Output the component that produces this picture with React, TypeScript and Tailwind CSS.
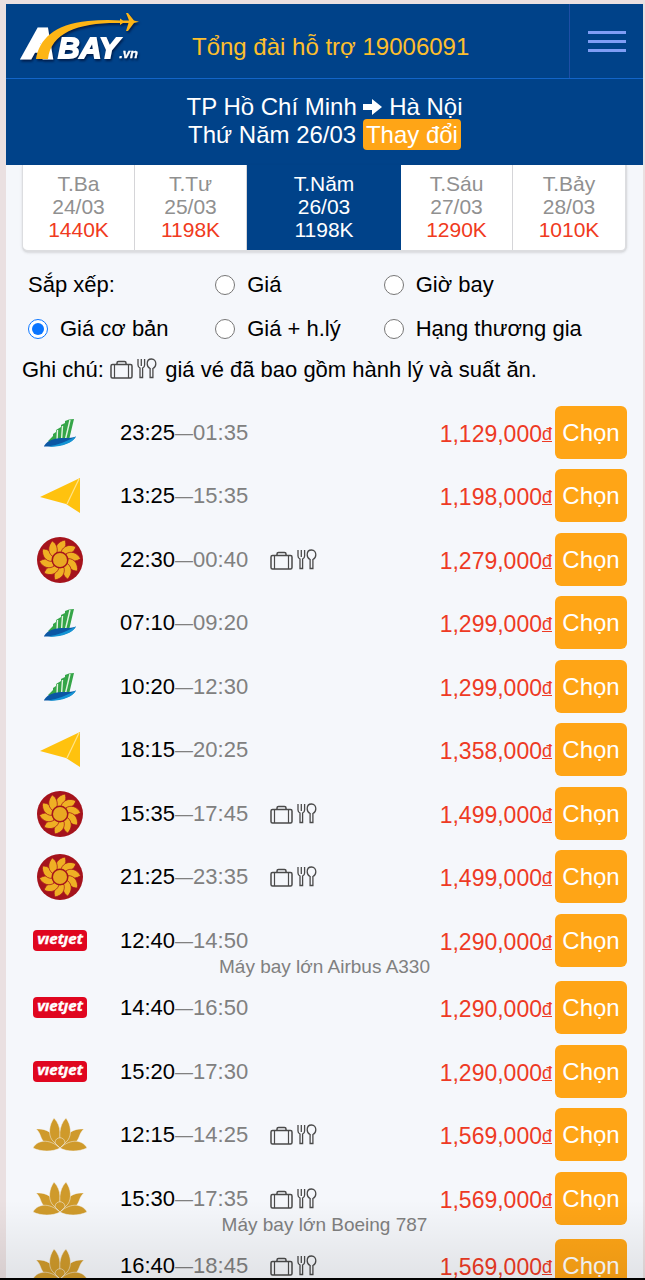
import React, { useState } from 'react';

type Airline = 'bamboo' | 'vietravel' | 'pacific' | 'vietjet' | 'vna';

interface Flight {
  airline: Airline;
  depart: string;
  arrive: string;
  price: string;
  meal?: boolean;
  note?: string;
}

const days = [
  { name: 'T.Ba', date: '24/03', price: '1440K' },
  { name: 'T.Tư', date: '25/03', price: '1198K' },
  { name: 'T.Năm', date: '26/03', price: '1198K' },
  { name: 'T.Sáu', date: '27/03', price: '1290K' },
  { name: 'T.Bảy', date: '28/03', price: '1010K' },
];

const sortOptions = [
  { id: 'price', label: 'Giá' },
  { id: 'time', label: 'Giờ bay' },
  { id: 'base', label: 'Giá cơ bản' },
  { id: 'luggage', label: 'Giá + h.lý' },
  { id: 'business', label: 'Hạng thương gia' },
];

const flights: Flight[] = [
  { airline: 'bamboo', depart: '23:25', arrive: '01:35', price: '1,129,000' },
  { airline: 'vietravel', depart: '13:25', arrive: '15:35', price: '1,198,000' },
  { airline: 'pacific', depart: '22:30', arrive: '00:40', price: '1,279,000', meal: true },
  { airline: 'bamboo', depart: '07:10', arrive: '09:20', price: '1,299,000' },
  { airline: 'bamboo', depart: '10:20', arrive: '12:30', price: '1,299,000' },
  { airline: 'vietravel', depart: '18:15', arrive: '20:25', price: '1,358,000' },
  { airline: 'pacific', depart: '15:35', arrive: '17:45', price: '1,499,000', meal: true },
  { airline: 'pacific', depart: '21:25', arrive: '23:35', price: '1,499,000', meal: true },
  { airline: 'vietjet', depart: '12:40', arrive: '14:50', price: '1,290,000', note: 'Máy bay lớn Airbus A330' },
  { airline: 'vietjet', depart: '14:40', arrive: '16:50', price: '1,290,000' },
  { airline: 'vietjet', depart: '15:20', arrive: '17:30', price: '1,290,000' },
  { airline: 'vna', depart: '12:15', arrive: '14:25', price: '1,569,000', meal: true },
  { airline: 'vna', depart: '15:30', arrive: '17:35', price: '1,569,000', meal: true, note: 'Máy bay lớn Boeing 787' },
  { airline: 'vna', depart: '16:40', arrive: '18:45', price: '1,569,000', meal: true },
];

const SiteLogo: React.FC = () => (
  <svg
    className="overflow-visible drop-shadow-[1px_2px_1px_rgba(0,20,60,0.8)]"
    width="120"
    height="56"
    viewBox="0 0 120 56"
    role="img"
    aria-label="ABAY.vn"
  >
    <g fontFamily="Liberation Sans, Arial, sans-serif" fontWeight="bold" fontStyle="italic" fill="#fff" stroke="#fff">
      <text x="3" y="45" fontSize="39" strokeWidth="5">A</text>
      <text x="36" y="46" fontSize="30" strokeWidth="1.800">
        BAY
        <tspan fontSize="13" strokeWidth="0.300">.vn</tspan>
      </text>
    </g>
    <path d="M14 47C17 28 32 12 66 9Q82 7.500 100 8.500V11C58 10 29 20 26 47Z" fill="#fdb515" />
    <path d="M98 6.500L101 8.500H107L104 1H106L112 8.500L117 9.700L112 11L106 19H104L106.500 11H101L98 13Z" fill="#fdb515" />
  </svg>
);

const MealIcons: React.FC<{ className?: string }> = ({ className = '' }) => (
  <svg className={className} width="47" height="22" viewBox="0 0 47 22" fill="none" stroke="#4a4a4a" strokeWidth="1.500" role="img" aria-label="Hành lý và suất ăn">
    <rect x="1" y="6.500" width="21" height="13.500" rx="1.500" />
    <path d="M4.500 6.500V20M18.500 6.500V20" strokeWidth="1.200" />
    <path d="M7 6.500V5q0-1.500 1.500-1.500h6q1.500 0 1.500 1.500v1.500" />
    <path d="M28 1v6q0 2.200 2 3v9.500h2.600V10q2-.8 2-3V1M31.300 1v7" strokeWidth="1.300" />
    <path d="M41.500 1c-2.800 0-4.300 2.200-4.300 4.700 0 2.300 1.200 4 2.900 4.800v9h2.800v-9c1.700-.8 2.900-2.500 2.900-4.800 0-2.500-1.500-4.700-4.300-4.700z" strokeWidth="1.300" />
  </svg>
);

const BambooLogo = () => (
  <svg width="34" height="30" viewBox="0 0 34 30" role="img" aria-label="Bamboo Airways">
    <path d="M5 23L10 18V16L13 14V12L18 9V7L22 5V3L26 1.500L31 1L26 22L8 25Z" fill="#35a548" />
    <path d="M14.500 12L14 23M19.500 8L18.500 22M27 2L22.500 21" stroke="#e4f3e0" strokeWidth="1.400" />
    <path d="M1 28C5 21 14 20 21 20C26 20 30 20 33 18.500C29 26 14 29 1 28.500Z" fill="#0b57a4" />
    <path d="M5 28.500C15 27 24 23 33 18.500C29 26 16 29.500 5 28.500Z" fill="#1394d4" />
  </svg>
);

const VietravelLogo = () => (
  <svg width="42" height="36" viewBox="0 0 42 36" role="img" aria-label="Vietravel Airlines">
    <path d="M1 19L41 0V35L27 26Z" fill="#ffc20e" />
    <path d="M40 1L28 26" stroke="#ffe48a" strokeWidth="1.200" />
  </svg>
);

const PacificLogo = () => (
  <svg width="46" height="46" viewBox="0 0 46 46" role="img" aria-label="Pacific Airlines">
    <circle cx="23" cy="23" r="23" fill="#a5131c" />
    {[0, 36, 72, 108, 144, 180, 216, 252, 288, 324].map((angle) => (
      <path
        key={angle}
        d="M19 15.500C17.500 9.500 21 4.500 28 3C30 8 28 13 24 16Z"
        fill="#efb024"
        stroke="#a5131c"
        strokeWidth="0.700"
        transform={`rotate(${angle} 23 23)`}
      />
    ))}
    <circle cx="23" cy="23" r="8.500" fill="#a5131c" />
    <circle cx="23" cy="23" r="7" fill="#e9a822" />
  </svg>
);

const VietjetLogo = () => (
  <svg className="overflow-visible" width="54" height="21" viewBox="0 0 54 21" role="img" aria-label="Vietjet">
    <rect width="54" height="21" rx="4" fill="#e0061f" />
    <text x="27" y="14" fontSize="15" fontWeight="bold" fontStyle="italic" textAnchor="middle" fill="#fff" stroke="#fff" strokeWidth="0.400" fontFamily="Open Sans, sans-serif">vıetȷet</text>
  </svg>
);

const LotusLogo = () => (
  <svg width="54" height="34" viewBox="0 0 54 34" role="img" aria-label="Vietnam Airlines">
    <g fill="#cf9a2b" stroke="#f4f6fb" strokeWidth="0.500">
      <path d="M3 11C13 10 22 15 25 27C21 31 15 29 11 24C7 20 8 15 3 11Z" />
      <path d="M51 11C41 10 32 15 29 27C33 31 39 29 43 24C47 20 46 15 51 11Z" />
      <path d="M21 0C16 7 15 16 19 22L25 28C28 21 29 8 21 0Z" />
      <path d="M33 0C38 7 39 16 35 22L29 28C26 21 25 8 33 0Z" />
      <path d="M0 30C4 22 16 20 27 30C20 34 8 34 0 30Z" />
      <path d="M54 30C50 22 38 20 27 30C34 34 46 34 54 30Z" />
      <path d="M22 25C22 18 32 18 32 25L27 30Z" />
    </g>
  </svg>
);

const airlineLogos: Record<Airline, React.FC> = {
  bamboo: BambooLogo,
  vietravel: VietravelLogo,
  pacific: PacificLogo,
  vietjet: VietjetLogo,
  vna: LotusLogo,
};

const FlightRow: React.FC<{ flight: Flight }> = ({ flight }) => {
  const Logo = airlineLogos[flight.airline];

  return (
    <li className="min-h-[63px] pb-[3px] even:min-h-16">
      <div className="flex h-[53px] items-center">
        <div className="flex w-[76px] shrink-0 justify-center">
          <Logo />
        </div>
        <div className="ml-[22px] flex w-[150px] items-center text-[22px]">
          <span>{flight.depart}</span>
          <span className="text-lg text-[#808080]">—</span>
          <span className="text-[#808080]">{flight.arrive}</span>
        </div>
        {flight.meal && <MealIcons />}
        <div className="ml-auto mr-[3px] pt-[3px] text-[23px] text-[#ee3a24]">
          {flight.price}
          <span className="align-[2px] text-lg underline">đ</span>
        </div>
        <button type="button" className="h-full w-[72px] rounded-md bg-[#ffa516] text-[24px] text-white">
          Chọn
        </button>
      </div>
      {flight.note && (
        <p className="-mt-[11px] text-center text-[19px] leading-[22px] text-[#808080]">{flight.note}</p>
      )}
    </li>
  );
};

const App: React.FC = () => {
  const [sort, setSort] = useState('base');
  const [activeDay, setActiveDay] = useState('26/03');

  return (
    <div className="relative h-screen overflow-hidden bg-[#eae0e1] pt-1 pr-0.5 pl-1.5 font-['Liberation_Sans',Arial,sans-serif] text-black">
      <div className="min-h-full bg-[#f5f7fb]">
        <header className="flex h-[75px] border-b border-[#1365c8] bg-[#004289]">
          <a href="#" className="ml-4 pt-2">
            <SiteLogo />
          </a>
          <a href="tel:19006091" className="flex flex-1 items-center pt-3 pl-[50px] text-[24px] text-[#fdbf2d]">
            Tổng đài hỗ trợ 19006091
          </a>
          <button type="button" aria-label="Menu" className="flex w-[74px] flex-col items-center justify-center gap-1.5 border-l border-[#1f4fa5]">
            <span className="h-[3px] w-[38px] bg-[#7f9df5]" />
            <span className="h-[3px] w-[38px] bg-[#7f9df5]" />
            <span className="h-[3px] w-[38px] bg-[#7f9df5]" />
          </button>
        </header>

        <section className="bg-[#004289] pt-3.5 pb-4 text-center text-[24px] leading-7 text-white">
          <h1>
            TP Hồ Chí Minh{' '}
            <svg className="inline align-[-1px]" width="19" height="18" viewBox="0 0 19 18" fill="#fff" aria-hidden="true">
              <path d="M0 6H9V1L19 9L9 17V12H0Z" />
            </svg>{' '}
            Hà Nội
          </h1>
          <div>
            Thứ Năm 26/03{' '}
            <a href="#" className="rounded-sm bg-[#ffa516] px-[3px] py-0.5">Thay đổi</a>
          </div>
        </section>

        <main className="px-4">
          {/* Chọn ngày bay */}
          <nav className="grid grid-cols-[8fr_8fr_11fr_8fr_8fr] rounded-b-md border-r-2 border-b-2 border-l border-[#dcdde0] bg-white shadow-sm">
            {days.map((day) => {
              const active = day.date === activeDay;
              return (
                <button
                  key={day.date}
                  type="button"
                  onClick={() => setActiveDay(day.date)}
                  className={`h-[85px] pb-0.5 text-[21px] leading-[23px] ${
                    active ? 'bg-[#004289] text-white' : 'border-r border-[#d5d5d8] text-[#909090] last:border-r-0'
                  }`}
                >
                  <span className="block">{day.name}</span>
                  <span className="block">{day.date}</span>
                  <span className={active ? 'block' : 'block text-[#f03a20]'}>{day.price}</span>
                </button>
              );
            })}
          </nav>

          {/* Sắp xếp */}
          <fieldset className="mt-[11px] grid grid-cols-[10fr_9fr_13fr] pl-1.5 text-[22px] leading-[44px]">
            <span>Sắp xếp:</span>
            {sortOptions.map((option) => (
              <label key={option.id} className="flex items-center gap-3">
                <input
                  type="radio"
                  name="sort"
                  checked={sort === option.id}
                  onChange={() => setSort(option.id)}
                  className="size-5 accent-[#0a75ff]"
                />
                {option.label}
              </label>
            ))}
          </fieldset>

          <p className="mt-[3px] text-[22px] leading-[32px]">
            Ghi chú: <MealIcons className="mr-0.5 inline align-[-3px]" /> giá vé đã bao gồm hành lý và suất ăn.
          </p>

          <ul className="mt-5">
            {flights.map((flight) => (
              <FlightRow key={flight.depart} flight={flight} />
            ))}
          </ul>
        </main>
      </div>
      <div className="pointer-events-none absolute inset-x-0 bottom-0 h-20 border-b-2 border-black bg-linear-to-t from-black/8 to-transparent" />
    </div>
  );
};

export default App;
